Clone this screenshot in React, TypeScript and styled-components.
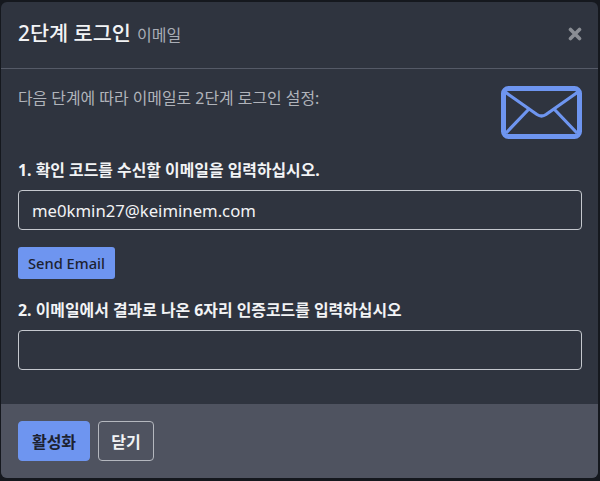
import React from "react";
import styled, { createGlobalStyle } from "styled-components";

const GlobalStyle = createGlobalStyle`
  html, body {
    margin: 0;
    padding: 0;
    background: #15181e;
  }
  * {
    box-sizing: border-box;
  }
`;

const Modal = styled.div`
  width: 597px;
  height: 476px;
  margin: 2px 0 0 1px;
  display: flex;
  flex-direction: column;
  background: #2f343f;
  border-radius: 6px;
  overflow: hidden;
  color: #fff;
  font-family: "Noto Sans", "Noto Sans CJK KR", sans-serif;
`;

const Header = styled.header`
  height: 67px;
  flex: none;
  display: flex;
  align-items: center;
  justify-content: space-between;
  padding: 0 16px 2px 17px;
  border-bottom: 1px solid #555a67;
`;

const Title = styled.h1`
  margin: 0;
  font-size: 20.8px;
  line-height: 30px;
  font-weight: 500;
  color: #f2f3f5;

  small {
    margin-left: 6px;
    font-size: 16px;
    font-weight: 400;
    color: #a9adb6;
  }
`;

const CloseButton = styled.button`
  width: 14px;
  height: 14px;
  padding: 0;
  border: none;
  background: none;
  display: flex;
  cursor: pointer;
`;

const Body = styled.div`
  flex: 1;
  display: flex;
  flex-direction: column;
  padding: 16px 16px 0 17px;
`;

const IntroRow = styled.div`
  display: flex;
  justify-content: space-between;
  align-items: flex-start;
  height: 54px;
  margin-bottom: 20px;
`;

const Intro = styled.p`
  margin: 2px 0 0;
  font-size: 15.9px;
  line-height: 22px;
  color: #b0b3ba;
`;

const StepLabel = styled.label`
  display: block;
  font-size: 15.9px;
  line-height: 22px;
  font-weight: 700;
  color: #f2f3f5;
  margin-bottom: 9px;
`;

const TextInput = styled.input`
  display: block;
  width: 564px;
  height: 40px;
  padding: 0 13px;
  background: transparent;
  border: 1px solid #c5c8ce;
  border-radius: 4px;
  color: #f2f3f5;
  font: 400 16.7px "Noto Sans", "Noto Sans CJK KR", sans-serif;

  &:focus {
    outline: none;
  }
`;

const SendButton = styled.button`
  display: block;
  width: 97px;
  height: 32px;
  margin: 17px 0 20px;
  padding: 0;
  border: none;
  border-radius: 3px;
  background: #6e95f0;
  color: #1d2230;
  font: 500 14.7px "Noto Sans", "Noto Sans CJK KR", sans-serif;
  cursor: pointer;
`;

const Footer = styled.footer`
  height: 74px;
  flex: none;
  display: flex;
  align-items: flex-start;
  gap: 8px;
  padding: 17px 17px 0;
  background: #4f5360;
`;

const FooterButton = styled.button<{ $primary?: boolean }>`
  height: 40px;
  width: ${(p) => (p.$primary ? "72px" : "56px")};
  padding: 0;
  border-radius: 4px;
  border: 1px solid ${(p) => (p.$primary ? "#6e95f0" : "#b4b7be")};
  background: ${(p) => (p.$primary ? "#6e95f0" : "transparent")};
  color: ${(p) => (p.$primary ? "#1d2230" : "#f2f3f5")};
  font: 700 16px "Noto Sans", "Noto Sans CJK KR", sans-serif;
  cursor: pointer;
`;

const EnvelopeSvg = styled.svg`
  margin-top: 1px;
`;

function CloseIcon() {
  return (
    <svg width="14" height="14" viewBox="0 0 14 14">
      <path d="M2.5 2.5 L11.5 11.5 M11.5 2.5 L2.5 11.5" stroke="#8a8d94" strokeWidth="3.6" strokeLinecap="round" />
    </svg>
  );
}

function EnvelopeIcon() {
  return (
    <EnvelopeSvg width="81" height="53" viewBox="0 0 81 53" fill="none" stroke="#6e95f0">
      <rect x="2.5" y="2.5" width="76" height="48" rx="5" strokeWidth="5" />
      <path
        d="M4 6 L36 28.5 Q40.5 31.5 45 28.5 L77 6 M27 24 L5 47 M54 24 L76 47"
        strokeWidth="3.2"
      />
    </EnvelopeSvg>
  );
}

export default function App() {
  return (
    <>
      <GlobalStyle />
      <Modal>
        <Header>
          <Title>
            2단계 로그인<small>이메일</small>
          </Title>
          <CloseButton aria-label="닫기">
            <CloseIcon />
          </CloseButton>
        </Header>
        <Body>
          <IntroRow>
            <Intro>다음 단계에 따라 이메일로 2단계 로그인 설정:</Intro>
            <EnvelopeIcon />
          </IntroRow>
          <StepLabel>1. 확인 코드를 수신할 이메일을 입력하십시오.</StepLabel>
          <TextInput defaultValue="me0kmin27@keiminem.com" />
          <SendButton>Send Email</SendButton>
          <StepLabel>2. 이메일에서 결과로 나온 6자리 인증코드를 입력하십시오</StepLabel>
          <TextInput />
        </Body>
        <Footer>
          <FooterButton $primary>활성화</FooterButton>
          <FooterButton>닫기</FooterButton>
        </Footer>
      </Modal>
    </>
  );
}
